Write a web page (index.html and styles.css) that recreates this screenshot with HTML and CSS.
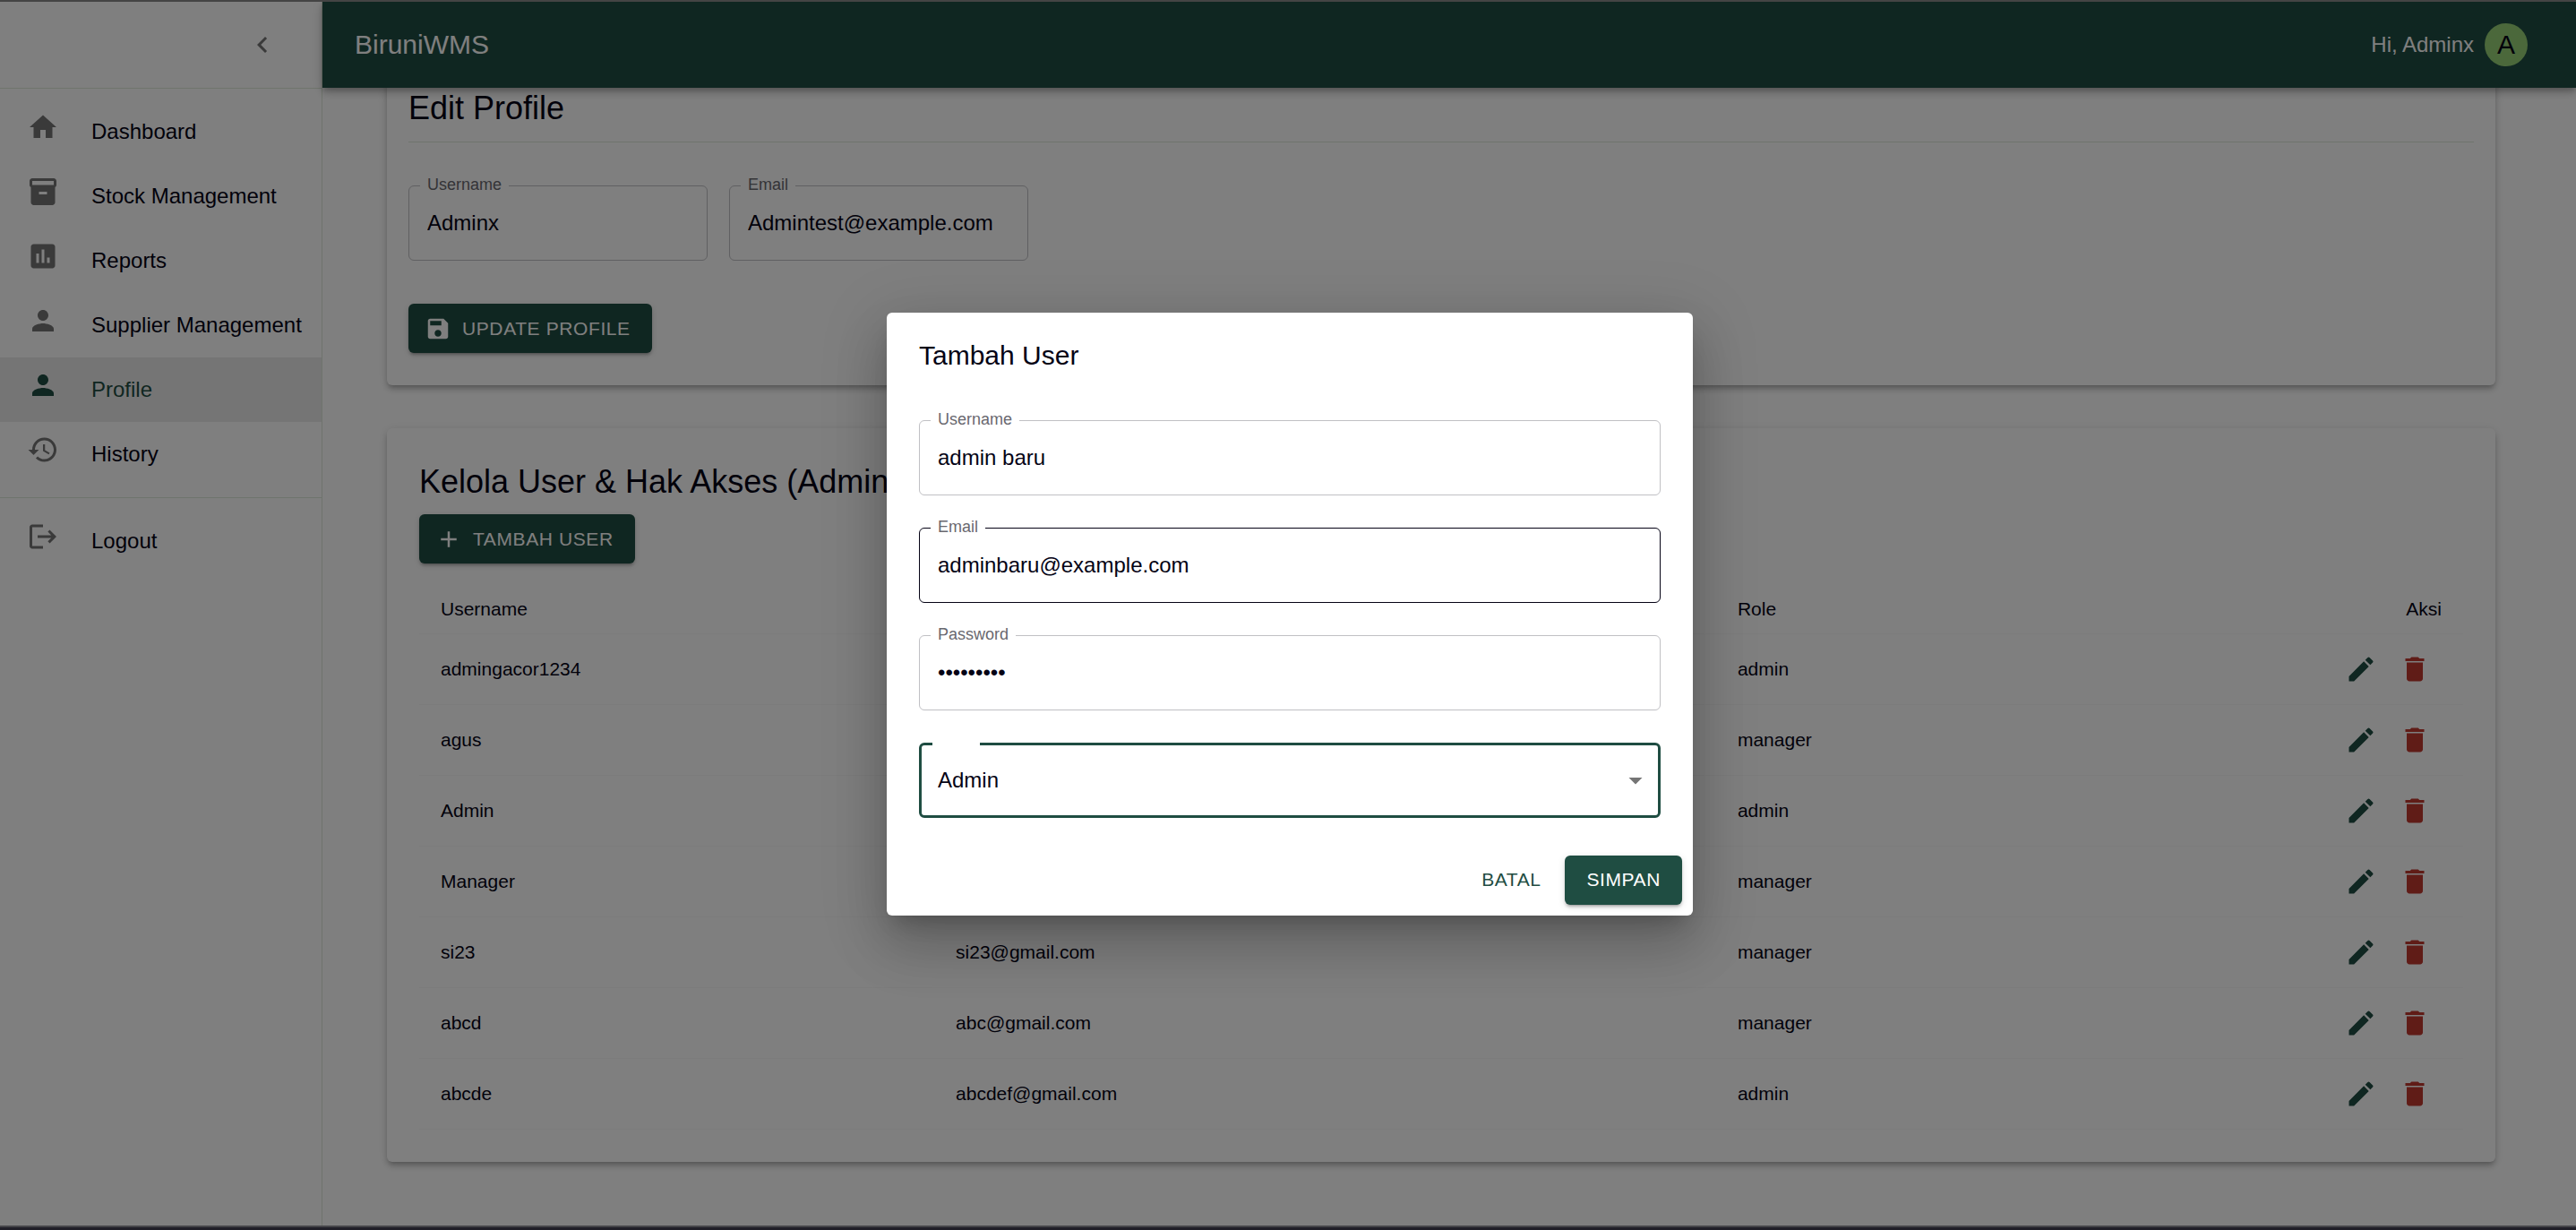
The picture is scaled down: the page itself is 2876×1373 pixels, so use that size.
FILE: index.html
```html
<!DOCTYPE html>
<html lang="id">
<head>
<meta charset="utf-8">
<title>BiruniWMS</title>
<link rel="stylesheet" href="styles.css">
</head>
<body>
<svg class="sprite" aria-hidden="true">
  <symbol id="edit" viewBox="0 0 24 24"><path d="M3 17.25V21h3.75L17.81 9.94l-3.75-3.75L3 17.25zM20.71 7.04c.39-.39.39-1.02 0-1.41l-2.34-2.34a.9959.9959 0 0 0-1.41 0l-1.83 1.83 3.75 3.75 1.83-1.83z"/></symbol>
  <symbol id="delete" viewBox="0 0 24 24"><path d="M6 19c0 1.1.9 2 2 2h8c1.1 0 2-.9 2-2V7H6v12zM19 4h-3.5l-1-1h-5l-1 1H5v2h14V4z"/></symbol>
  <symbol id="person" viewBox="0 0 24 24"><path d="M12 12c2.21 0 4-1.79 4-4s-1.79-4-4-4-4 1.79-4 4 1.79 4 4 4zm0 2c-2.67 0-8 1.34-8 4v2h16v-2c0-2.66-5.33-4-8-4z"/></symbol>
</svg>
<div class="window">
  <div class="app">
    <aside class="sidebar">
      <div class="sidebar-head">
        <button class="icon-button" aria-label="Tutup menu"><svg class="icon" viewBox="0 0 24 24"><path d="M15.41 7.41 14 6l-6 6 6 6 1.41-1.41L10.83 12z"/></svg></button>
      </div>
      <nav class="nav">
        <a class="nav-item" href="#"><svg class="icon" viewBox="0 0 24 24"><path d="M10 20v-6h4v6h5v-8h3L12 3 2 12h3v8z"/></svg><span>Dashboard</span></a>
        <a class="nav-item" href="#"><svg class="icon" viewBox="0 0 24 24"><path d="M20 2H4c-1 0-2 .9-2 2v3.010c0 .72.43 1.340 1 1.690V20c0 1.100 1.100 2 2 2h14c.9 0 2-.9 2-2V8.700c.57-.35 1-.97 1-1.690V4c0-1.100-1-2-2-2zm-5 12H9v-2h6v2zm5-7H4V4h16v3z"/></svg><span>Stock Management</span></a>
        <a class="nav-item" href="#"><svg class="icon" viewBox="0 0 24 24"><path d="M19 3H5c-1.100 0-2 .9-2 2v14c0 1.100.9 2 2 2h14c1.100 0 2-.9 2-2V5c0-1.100-.9-2-2-2zM9 17H7v-7h2v7zm4 0h-2V7h2v10zm4 0h-2v-4h2v4z"/></svg><span>Reports</span></a>
        <a class="nav-item" href="#"><svg class="icon"><use href="#person"/></svg><span>Supplier Management</span></a>
        <a class="nav-item active" href="#"><svg class="icon"><use href="#person"/></svg><span>Profile</span></a>
        <a class="nav-item" href="#"><svg class="icon" viewBox="0 0 24 24"><path d="M13 3c-4.970 0-9 4.030-9 9H1l3.890 3.890.07.14L9 12H6c0-3.870 3.130-7 7-7s7 3.130 7 7-3.130 7-7 7c-1.930 0-3.680-.79-4.940-2.060l-1.420 1.420C8.270 19.990 10.510 21 13 21c4.970 0 9-4.030 9-9s-4.030-9-9-9zm-1 5v5l4.280 2.540.72-1.210-3.500-2.080V8H12z"/></svg><span>History</span></a>
      </nav>
      <nav class="nav">
        <a class="nav-item" href="#"><svg class="icon" viewBox="0 0 24 24"><path d="m17 7-1.410 1.410L18.170 11H8v2h10.170l-2.580 2.580L17 17l5-5zM4 5h8V3H4c-1.100 0-2 .9-2 2v14c0 1.100.9 2 2 2h8v-2H4V5z"/></svg><span>Logout</span></a>
      </nav>
    </aside>
    <div class="content">
      <header class="app-bar">
        <div class="brand">BiruniWMS</div>
        <div class="greeting">Hi, Adminx</div>
        <div class="avatar">A</div>
      </header>
      <main class="main">
        <section class="card profile">
          <h2>Edit Profile</h2>
          <hr>
          <div class="fields">
            <div class="field"><input id="p-name" type="text" value="Adminx"><label for="p-name">Username</label></div>
            <div class="field"><input id="p-email" type="text" value="Admintest@example.com"><label for="p-email">Email</label></div>
          </div>
          <button class="button filled"><svg class="icon small" viewBox="0 0 24 24"><path d="M17 3H5c-1.110 0-2 .9-2 2v14c0 1.100.89 2 2 2h14c1.100 0 2-.9 2-2V7l-4-4zm-5 16c-1.660 0-3-1.340-3-3s1.340-3 3-3 3 1.340 3 3-1.340 3-3 3zm3-10H5V5h10v4z"/></svg>UPDATE PROFILE</button>
        </section>
        <section class="card users">
          <h2>Kelola User &amp; Hak Akses (Admin)</h2>
          <button class="button filled"><svg class="icon small" viewBox="0 0 24 24"><path d="M19 13h-6v6h-2v-6H5v-2h6V5h2v6h6v2z"/></svg>TAMBAH USER</button>
          <table>
            <colgroup><col class="col-name"><col class="col-email"><col><col></colgroup>
            <thead><tr><th>Username</th><th>Email</th><th>Role</th><th class="actions">Aksi</th></tr></thead>
            <tbody>
              <tr><td>admingacor1234</td><td></td><td>admin</td><td class="actions"><button class="icon-button edit" aria-label="Edit"><svg class="icon"><use href="#edit"/></svg></button><button class="icon-button delete" aria-label="Hapus"><svg class="icon"><use href="#delete"/></svg></button></td></tr>
              <tr><td>agus</td><td></td><td>manager</td><td class="actions"><button class="icon-button edit" aria-label="Edit"><svg class="icon"><use href="#edit"/></svg></button><button class="icon-button delete" aria-label="Hapus"><svg class="icon"><use href="#delete"/></svg></button></td></tr>
              <tr><td>Admin</td><td></td><td>admin</td><td class="actions"><button class="icon-button edit" aria-label="Edit"><svg class="icon"><use href="#edit"/></svg></button><button class="icon-button delete" aria-label="Hapus"><svg class="icon"><use href="#delete"/></svg></button></td></tr>
              <tr><td>Manager</td><td></td><td>manager</td><td class="actions"><button class="icon-button edit" aria-label="Edit"><svg class="icon"><use href="#edit"/></svg></button><button class="icon-button delete" aria-label="Hapus"><svg class="icon"><use href="#delete"/></svg></button></td></tr>
              <tr><td>si23</td><td>si23@gmail.com</td><td>manager</td><td class="actions"><button class="icon-button edit" aria-label="Edit"><svg class="icon"><use href="#edit"/></svg></button><button class="icon-button delete" aria-label="Hapus"><svg class="icon"><use href="#delete"/></svg></button></td></tr>
              <tr><td>abcd</td><td>abc@gmail.com</td><td>manager</td><td class="actions"><button class="icon-button edit" aria-label="Edit"><svg class="icon"><use href="#edit"/></svg></button><button class="icon-button delete" aria-label="Hapus"><svg class="icon"><use href="#delete"/></svg></button></td></tr>
              <tr><td>abcde</td><td>abcdef@gmail.com</td><td>admin</td><td class="actions"><button class="icon-button edit" aria-label="Edit"><svg class="icon"><use href="#edit"/></svg></button><button class="icon-button delete" aria-label="Hapus"><svg class="icon"><use href="#delete"/></svg></button></td></tr>
            </tbody>
          </table>
        </section>
      </main>
    </div>
  </div>
  <div class="backdrop">
    <form class="dialog" role="dialog" aria-modal="true" aria-labelledby="dialog-title">
      <h2 id="dialog-title">Tambah User</h2>
      <div class="dialog-fields">
        <div class="field"><input id="d-name" type="text" value="admin baru"><label for="d-name">Username</label></div>
        <div class="field hovered"><input id="d-email" type="text" value="adminbaru@example.com"><label for="d-email">Email</label></div>
        <div class="field"><input id="d-pass" type="password" value="rahasia12"><label for="d-pass">Password</label></div>
        <div class="field focused">
          <select aria-label="Role"><option>Admin</option><option>Manager</option></select>
          <span class="notch"></span>
          <svg class="icon arrow" viewBox="0 0 24 24"><path d="m7 10 5 5 5-5z"/></svg>
        </div>
      </div>
      <div class="dialog-actions">
        <button type="button" class="button text">BATAL</button>
        <button type="button" class="button filled">SIMPAN</button>
      </div>
    </form>
  </div>
</div>
<div class="window-edge"></div>
</body>
</html>
```
FILE: styles.css
```css
:root {
  --primary: #1f4d42;
  --text: #050315;
  --muted: #757575;
  --line: #dfe9da;
}

* { box-sizing: border-box; }

body {
  margin: 0;
  height: 100vh;
  display: flex;
  flex-direction: column;
  overflow: hidden;
  background: #fff;
  color: var(--text);
  font: 24px/36px "Liberation Sans", Arial, sans-serif;
}

h2, hr { margin: 0; }
h2 { font-weight: 400; font-size: 36px; line-height: 48px; }
button, input, select { font: inherit; color: inherit; margin: 0; border: 0; background: none; }
button { cursor: pointer; }

.sprite { position: absolute; width: 0; height: 0; }
.icon { display: block; flex: none; width: 36px; height: 36px; fill: currentColor; }
.icon.small { width: 30px; height: 30px; margin-left: -6px; }

.window {
  position: relative;
  flex: 1;
  min-height: 0;
  overflow: hidden;
  border-top: 2px solid #444;
}
.window-edge { height: 5px; background: #201f28; border-top: 2px solid #444448; }

.app { display: flex; height: 100%; }

.sidebar {
  flex: none;
  width: 360px;
  border-right: 1px solid var(--line);
}
.sidebar-head {
  height: 96px;
  display: flex;
  align-items: center;
  justify-content: flex-end;
  padding-right: 36px;
  color: var(--muted);
}
.nav { padding: 12px 0; border-top: 1px solid var(--line); }
.nav-item {
  display: flex;
  align-items: center;
  gap: 36px;
  height: 72px;
  padding-left: 30px;
  color: var(--text);
  text-decoration: none;
  white-space: nowrap;
}
.nav-item .icon { color: var(--muted); margin-bottom: 10px; }
.nav-item.active { background: #ebebeb; color: var(--primary); }
.nav-item.active .icon { color: var(--primary); }

.content { flex: 1; min-width: 0; }

.app-bar {
  position: relative;
  z-index: 1;
  display: flex;
  align-items: center;
  height: 96px;
  padding: 0 54px 0 36px;
  background: var(--primary);
  color: #fff;
  box-shadow: 0 3px 6px -1px rgba(0, 0, 0, .2), 0 6px 8px 0 rgba(0, 0, 0, .14), 0 2px 15px 0 rgba(0, 0, 0, .12);
}
.brand { flex: 1; font-size: 30px; }
.avatar {
  width: 48px;
  height: 48px;
  margin-left: 12px;
  border-radius: 50%;
  background: #97d077;
  color: var(--text);
  font-size: 30px;
  line-height: 48px;
  text-align: center;
}

.main {
  display: flex;
  flex-direction: column;
  gap: 48px;
  margin-top: -24px;
  padding: 0 90px 0 72px;
}
.card {
  border-radius: 6px;
  background: #fff;
  box-shadow: 0 4px 5px -3px rgba(0, 0, 0, .2), 0 5px 6px 0 rgba(0, 0, 0, .14), 0 2px 12px 0 rgba(0, 0, 0, .12);
}

.profile { padding: 23px 24px 36px; }
.profile hr { height: 1px; margin: 13px 0 48px; border: 0; background: var(--line); }
.fields { display: flex; gap: 24px; margin-bottom: 48px; }
.fields .field { width: 334px; }

.field { position: relative; height: 84px; }
.field input, .field select {
  width: 100%;
  height: 100%;
  padding: 0 20px;
  border: 1px solid #c0c0c4;
  border-radius: 6px;
  outline: 0;
  appearance: none;
}
.field label {
  position: absolute;
  left: 13px;
  top: -12px;
  padding: 0 8px;
  background: #fff;
  color: #69686f;
  font-size: 18px;
  line-height: 22px;
}
.field.hovered input { border-color: var(--text); }
.field.focused select { padding: 0 18px; border: 3px solid var(--primary); }
.notch { position: absolute; left: 15px; top: 0; width: 53px; height: 3px; background: #fff; }
.arrow { position: absolute; right: 10px; top: 24px; color: #757575; pointer-events: none; }

.button {
  display: inline-flex;
  align-items: center;
  justify-content: center;
  gap: 12px;
  height: 55px;
  min-width: 96px;
  padding: 0 24px;
  border-radius: 6px;
  font-size: 21px;
  letter-spacing: 0.02857em;
  white-space: nowrap;
}
.button.filled {
  background: var(--primary);
  color: #fff;
  box-shadow: 0 4px 2px -3px rgba(0, 0, 0, .2), 0 3px 3px 0 rgba(0, 0, 0, .14), 0 2px 8px 0 rgba(0, 0, 0, .12);
}
.button.text { padding: 0 12px; color: var(--primary); }

.users { display: flex; flex-direction: column; align-items: flex-start; gap: 12px; padding: 36px; }
table {
  width: 100%;
  margin-top: 12px;
  border-collapse: separate;
  border-spacing: 0;
  table-layout: fixed;
  font-size: 21px;
}
.col-name { width: 25.2%; }
.col-email { width: 38.25%; }
th, td {
  padding: 9px 24px;
  border-bottom: 1px solid #f9f9f9;
  font-weight: 400;
  text-align: left;
}
.actions { text-align: right; }
td.actions { font-size: 0; }
.icon-button { display: inline-block; padding: 12px; vertical-align: middle; }
.edit { color: var(--primary); }
.delete { color: #c0392f; }

.backdrop {
  position: absolute;
  inset: 0;
  z-index: 2;
  display: flex;
  align-items: center;
  justify-content: center;
  padding-left: 4px;
  background: rgba(0, 0, 0, .5);
}
.dialog {
  width: 900px;
  border-radius: 6px;
  background: #fff;
  box-shadow: 0 16px 22px -10px rgba(0, 0, 0, .2), 0 36px 57px 4px rgba(0, 0, 0, .14), 0 14px 69px 12px rgba(0, 0, 0, .12);
}
.dialog h2 { padding: 24px 36px; font-size: 30px; }
.dialog-fields { display: grid; gap: 36px; padding: 24px 36px 30px; }
.dialog-actions { display: flex; justify-content: flex-end; gap: 12px; padding: 12px; }
```
